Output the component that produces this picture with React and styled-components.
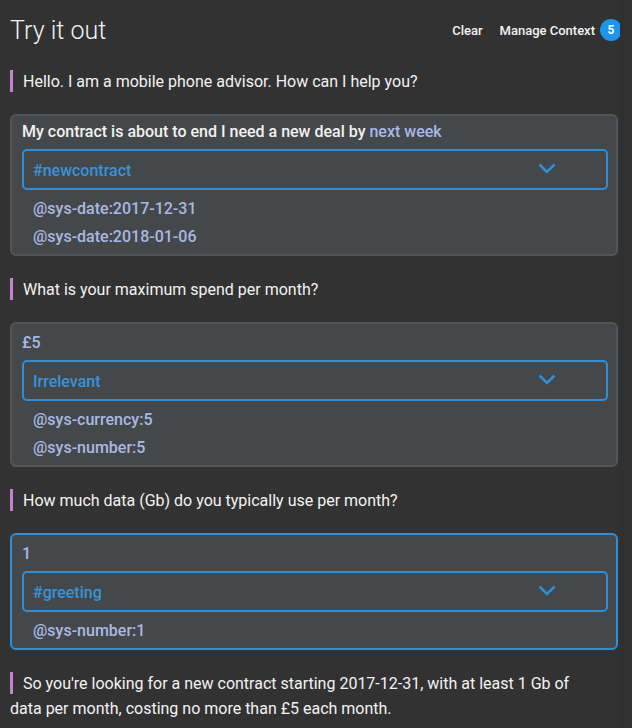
import React from "react";
import styled, { createGlobalStyle } from "styled-components";

const GlobalStyle = createGlobalStyle`
  html, body {
    margin: 0;
    padding: 0;
    background: #323232;
  }
  body {
    font-family: Roboto, "Noto Sans", sans-serif;
    color: #f2f2f2;
  }
`;

const Screen = styled.div`
  width: 632px;
  height: 728px;
  display: flex;
  overflow: hidden;
  background: #323232;
`;

const Content = styled.div`
  width: 608px;
  padding-left: 10px;
  display: flex;
  flex-direction: column;

  & > * {
    flex-shrink: 0;
  }
`;

const Track = styled.div`
  flex: 1;
  margin-left: 2px;
  background: #303030;
`;

const Header = styled.div`
  height: 57px;
  display: flex;
  align-items: flex-start;
  justify-content: space-between;
  padding-top: 16px;
  box-sizing: border-box;
`;

const Title = styled.h1`
  margin: 0;
  font-size: 25px;
  line-height: 30px;
  font-weight: 300;
  color: #f4f4f4;
`;

const Actions = styled.div`
  display: flex;
  align-items: center;
  gap: 17px;
  margin-top: 3px;
  margin-right: -4px;
`;

const ActionButton = styled.span`
  display: flex;
  align-items: center;
  gap: 5px;
  font-size: 13px;
  font-weight: 500;
  color: #f2f2f2;
`;

const Badge = styled.span`
  width: 22px;
  height: 22px;
  border-radius: 50%;
  background: #1e94ea;
  color: #fff;
  font-size: 12px;
  font-weight: 700;
  display: grid;
  place-items: center;
`;

const Message = styled.p`
  margin: 21px 0 20px;
  font-size: 16px;
  line-height: 25px;
  color: #f2f2f2;
  max-width: 580px;

  &:first-of-type {
    margin-top: 12px;
  }
`;

const Bar = styled.span`
  display: inline-block;
  width: 3px;
  height: 22px;
  background: #c77fd0;
  margin-right: 10px;
  vertical-align: -5px;
`;

const Card = styled.div`
  background: #45484a;
  border: ${(p) => (p.$active ? "2px solid #2e8fd6" : "2px solid #535658")};
  border-radius: 6px;
  padding: 6px 8px 3px 10px;
`;

const Utterance = styled.div`
  font-size: 16px;
  font-weight: 500;
  line-height: 19px;
  padding-top: ${(p) => (p.$value ? "3px" : "0")};
  color: #f2f2f2;
  margin-bottom: 8px;
`;

const Mention = styled.span`
  color: #a7b9e8;
`;

const Dropdown = styled.div`
  height: 41px;
  box-sizing: border-box;
  border: 2px solid #2e8fd6;
  border-radius: 5px;
  display: flex;
  align-items: center;
  justify-content: space-between;
  padding: 2px 50px 0 9px;
  margin-bottom: 5px;
`;

const Intent = styled.span`
  font-size: 16px;
  font-weight: 500;
  color: #3893db;
`;

const Entity = styled.div`
  font-size: 16px;
  font-weight: 500;
  line-height: 28px;
  padding-left: 11px;
  color: #a9b8e2;
`;

function Chevron() {
  return (
    <svg width="18" height="11" viewBox="0 0 18 11" style={{ marginTop: -4 }}>
      <path d="M1.5 1.5 L9 9 L16.5 1.5" fill="none" stroke="#2e8fd6" strokeWidth="2.6" />
    </svg>
  );
}

function ExchangeCard({ active, value, utterance, intent, entities }) {
  return (
    <Card $active={active}>
      <Utterance $value={value}>{utterance}</Utterance>
      <Dropdown>
        <Intent>{intent}</Intent>
        <Chevron />
      </Dropdown>
      {entities.map((e) => (
        <Entity key={e}>{e}</Entity>
      ))}
    </Card>
  );
}

export default function App() {
  return (
    <Screen>
      <GlobalStyle />
      <Content>
        <Header>
          <Title>Try it out</Title>
          <Actions>
            <ActionButton>Clear</ActionButton>
            <ActionButton>
              Manage Context <Badge>5</Badge>
            </ActionButton>
          </Actions>
        </Header>

        <Message>
          <Bar />
          Hello. I am a mobile phone advisor. How can I help you?
        </Message>
        <ExchangeCard
          utterance={
            <>
              My contract is about to end I need a new deal by <Mention>next week</Mention>
            </>
          }
          intent="#newcontract"
          entities={["@sys-date:2017-12-31", "@sys-date:2018-01-06"]}
        />

        <Message>
          <Bar />
          What is your maximum spend per month?
        </Message>
        <ExchangeCard
          value
          utterance={<Mention>£5</Mention>}
          intent="Irrelevant"
          entities={["@sys-currency:5", "@sys-number:5"]}
        />

        <Message>
          <Bar />
          How much data (Gb) do you typically use per month?
        </Message>
        <ExchangeCard
          active
          value
          utterance={<Mention>1</Mention>}
          intent="#greeting"
          entities={["@sys-number:1"]}
        />

        <Message>
          <Bar />
          So you're looking for a new contract starting 2017-12-31, with at least 1 Gb of data per
          month, costing no more than £5 each month.
        </Message>
      </Content>
      <Track />
    </Screen>
  );
}
